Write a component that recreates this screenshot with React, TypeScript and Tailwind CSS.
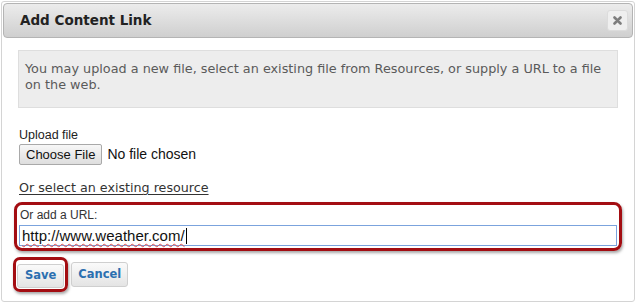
import React from "react";

const verdana = "font-['DejaVu_Sans',Verdana,sans-serif]";
const arial = "font-['Liberation_Sans',Arial,sans-serif]";

export default function App() {
  return (
    <div className="w-[640px] h-[304px] bg-white p-[1px] pr-[5px] pb-[2px]">
      <div className="h-full border border-[#d4d4d4] rounded-[3px] bg-white flex flex-col p-[1px]">
        {/* Title bar */}
        <div className="h-[35px] shrink-0 flex items-center justify-between rounded-[4px] border border-[#b4b4b4] bg-gradient-to-b from-[#ececec] to-[#cfcfcf] pl-[16px] pr-[4px]">
          <h1 className={`${verdana} text-[13.5px] font-bold text-[#222]`}>Add Content Link</h1>
          <button className="w-[21px] h-[21px] flex items-center justify-center rounded-[3px] border border-[#dcdcdc] bg-[#efefef]">
            <svg width="9" height="9" viewBox="0 0 9 9">
              <path d="M1.5 1.5 L7.5 7.5 M7.5 1.5 L1.5 7.5" stroke="#7e7e7e" strokeWidth="2.6" strokeLinecap="round" />
            </svg>
          </button>
        </div>

        <div className="flex flex-col px-[16px]">
          {/* Info box */}
          <div className={`mt-[12px] -mx-[1px] h-[58px] border border-[#dedede] bg-[#ededed] px-[6px] pt-[10px] ${verdana} text-[12.8px] leading-[16px] text-[#5a5a5a]`}>
            You may upload a new file, select an existing file from Resources, or supply a URL to a file on the web.
          </div>

          {/* Upload */}
          <div className={`mt-[20px] ${arial} text-[12.5px] leading-[14px] text-[#222]`}>Upload file</div>
          <div className="mt-[2px] flex items-center gap-[5px]">
            <button className={`h-[21px] px-[6px] rounded-[2px] border border-[#a9a9a9] bg-gradient-to-b from-[#f7f7f7] to-[#dedede] ${arial} text-[13px] text-[#111]`}>
              Choose File
            </button>
            <span className={`${arial} text-[14px] text-[#111]`}>No file chosen</span>
          </div>

          <a className={`mt-[15px] ${verdana} text-[12.7px] leading-[15px] text-[#333] underline underline-offset-2 w-fit`}>
            Or select an existing resource
          </a>

          {/* URL (annotated) */}
          <div className="mt-[7px] -mx-[5px] rounded-[8px] border-[3px] border-[#a30d12] shadow-[1px_2px_3px_rgba(0,0,0,0.35)] px-[2px] pt-[2px] pb-[2px]">
            <div className={`${arial} text-[12px] leading-[16px] text-[#333] pl-[1px]`}>Or add a URL:</div>
            <div className="mt-[2px] h-[21px] border border-[#7ba3dd] flex items-center pl-[2px]">
              <span className={`${arial} text-[15px] leading-[17px] text-[#111] underline decoration-wavy decoration-[#e05050] decoration-[1px] underline-offset-[2px]`}>
                http://www.weather.com/
              </span>
              <span className="ml-[1px] w-[1px] h-[16px] bg-black" />
            </div>
          </div>

          {/* Buttons */}
          <div className="mt-[6px] flex items-center gap-[3px]">
            <div className="-ml-[6px] rounded-[7px] border-[3px] border-[#a30d12] shadow-[1px_2px_3px_rgba(0,0,0,0.35)] p-[1px]">
              <button className={`h-[24px] px-[7px] rounded-[3px] border border-[#cfcfcf] bg-gradient-to-b from-[#fafafa] to-[#e4e4e4] ${verdana} text-[11.5px] font-bold text-[#2b6fb0]`}>
                Save
              </button>
            </div>
            <button className={`h-[25px] px-[6px] rounded-[3px] border border-[#cfcfcf] bg-gradient-to-b from-[#fafafa] to-[#e4e4e4] ${verdana} text-[11.5px] font-bold text-[#2b6fb0]`}>
              Cancel
            </button>
          </div>
        </div>
      </div>
    </div>
  );
}
